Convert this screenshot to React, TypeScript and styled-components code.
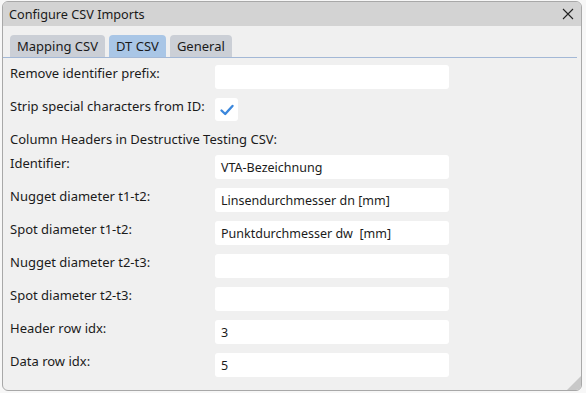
import React from 'react';
import styled, { createGlobalStyle } from 'styled-components';

const GlobalStyle = createGlobalStyle`
  html, body {
    margin: 0;
    padding: 0;
    background: #f7f7f7;
  }
  body {
    font-family: 'Noto Sans', 'Open Sans', sans-serif;
    color: #1b1b1b;
  }
`;

const rows = [
  { label: 'Identifier:', value: 'VTA-Bezeichnung' },
  { label: 'Nugget diameter t1-t2:', value: 'Linsendurchmesser dn [mm]' },
  { label: 'Spot diameter t1-t2:', value: 'Punktdurchmesser dw  [mm]' },
  { label: 'Nugget diameter t2-t3:', value: '' },
  { label: 'Spot diameter t2-t3:', value: '' },
  { label: 'Header row idx:', value: '3' },
  { label: 'Data row idx:', value: '5' },
];

export default function App() {
  return (
    <>
      <GlobalStyle />
      <Window>
        <TitleBar>
          <span>Configure CSV Imports</span>
          <CloseButton aria-label="close">
            <svg width="12" height="12" viewBox="0 0 12 12">
              <path d="M1 1 L11 11 M11 1 L1 11" stroke="#222" strokeWidth="1.1" fill="none" />
            </svg>
          </CloseButton>
        </TitleBar>

        <Body>
          {/* tabs */}
          <TabBar>
            <Tab>Mapping CSV</Tab>
            <Tab active>DT CSV</Tab>
            <Tab>General</Tab>
          </TabBar>

          {/* form */}
          <Form>
            <Row>
              <Label>Remove identifier prefix:</Label>
              <Field value="" />
            </Row>
            <Row>
              <Label>Strip special characters from ID:</Label>
              <CheckBox>
                <svg width="16" height="16" viewBox="0 0 16 16">
                  <path d="M2.5 8.5 L6.2 12 L13.5 4" stroke="#3b87dc" strokeWidth="2.4" fill="none" strokeLinecap="round" strokeLinejoin="round" />
                </svg>
              </CheckBox>
            </Row>
            <SectionTitle>Column Headers in Destructive Testing CSV:</SectionTitle>
            {rows.map(r => (
              <Row key={r.label}>
                <Label>{r.label}</Label>
                <Field value={r.value} />
              </Row>
            ))}
          </Form>
        </Body>
        <Grip />
      </Window>
    </>
  );
}

function Field({ value }: { value: string }) {
  return <Input>{value}</Input>;
}

const Window = styled.div`
  position: relative;
  margin: 1px 0 0 2px;
  width: 580px;
  height: 390px;
  box-sizing: border-box;
  border: 1px solid #a8a8a8;
  border-radius: 6px;
  overflow: hidden;
  background: #f0f0f0;
`;

const TitleBar = styled.div`
  height: 24px;
  padding: 0 6px;
  background: #d3d3d3;
  display: flex;
  align-items: center;
  justify-content: space-between;
  font-size: 12.7px;
  color: #1a1a1a;
`;

const CloseButton = styled.div`
  width: 20px;
  height: 20px;
  display: flex;
  align-items: center;
  justify-content: center;
  margin-right: -3px;
`;

const Body = styled.div`
  padding: 9px 4px 0 0;
`;

const TabBar = styled.div`
  display: flex;
  gap: 4px;
  padding-left: 7px;
  border-bottom: 1px solid #a3b8d6;
`;

const Tab = styled.div<{ active?: boolean }>`
  height: 22px;
  padding: 0 7px;
  display: flex;
  align-items: center;
  font-size: 13px;
  border-radius: 4px 4px 0 0;
  background: ${p => (p.active ? '#a9c6e6' : '#cbcfd6')};
  color: #1a1a1a;
`;

const Form = styled.div`
  padding: 7px 0 0 7px;
  display: flex;
  flex-direction: column;
`;

const Row = styled.div`
  height: 33px;
  display: flex;
  align-items: flex-start;
`;

const Label = styled.div`
  width: 205px;
  font-size: 13px;
  line-height: 17px;
`;

const Input = styled.div`
  width: 234px;
  height: 24px;
  box-sizing: border-box;
  padding: 0 6px;
  background: #fff;
  border-radius: 3px;
  display: flex;
  align-items: center;
  font-size: 12.5px;
  white-space: pre;
`;

const CheckBox = styled.div`
  width: 23px;
  height: 23px;
  background: #fff;
  border-radius: 3px;
  display: flex;
  align-items: center;
  justify-content: center;
`;

const SectionTitle = styled.div`
  height: 24px;
  font-size: 13px;
  line-height: 17px;
`;

const Grip = styled.div`
  position: absolute;
  right: 0;
  bottom: 0;
  width: 0;
  height: 0;
  border-left: 14px solid transparent;
  border-bottom: 14px solid #c8c8c8;
`;
